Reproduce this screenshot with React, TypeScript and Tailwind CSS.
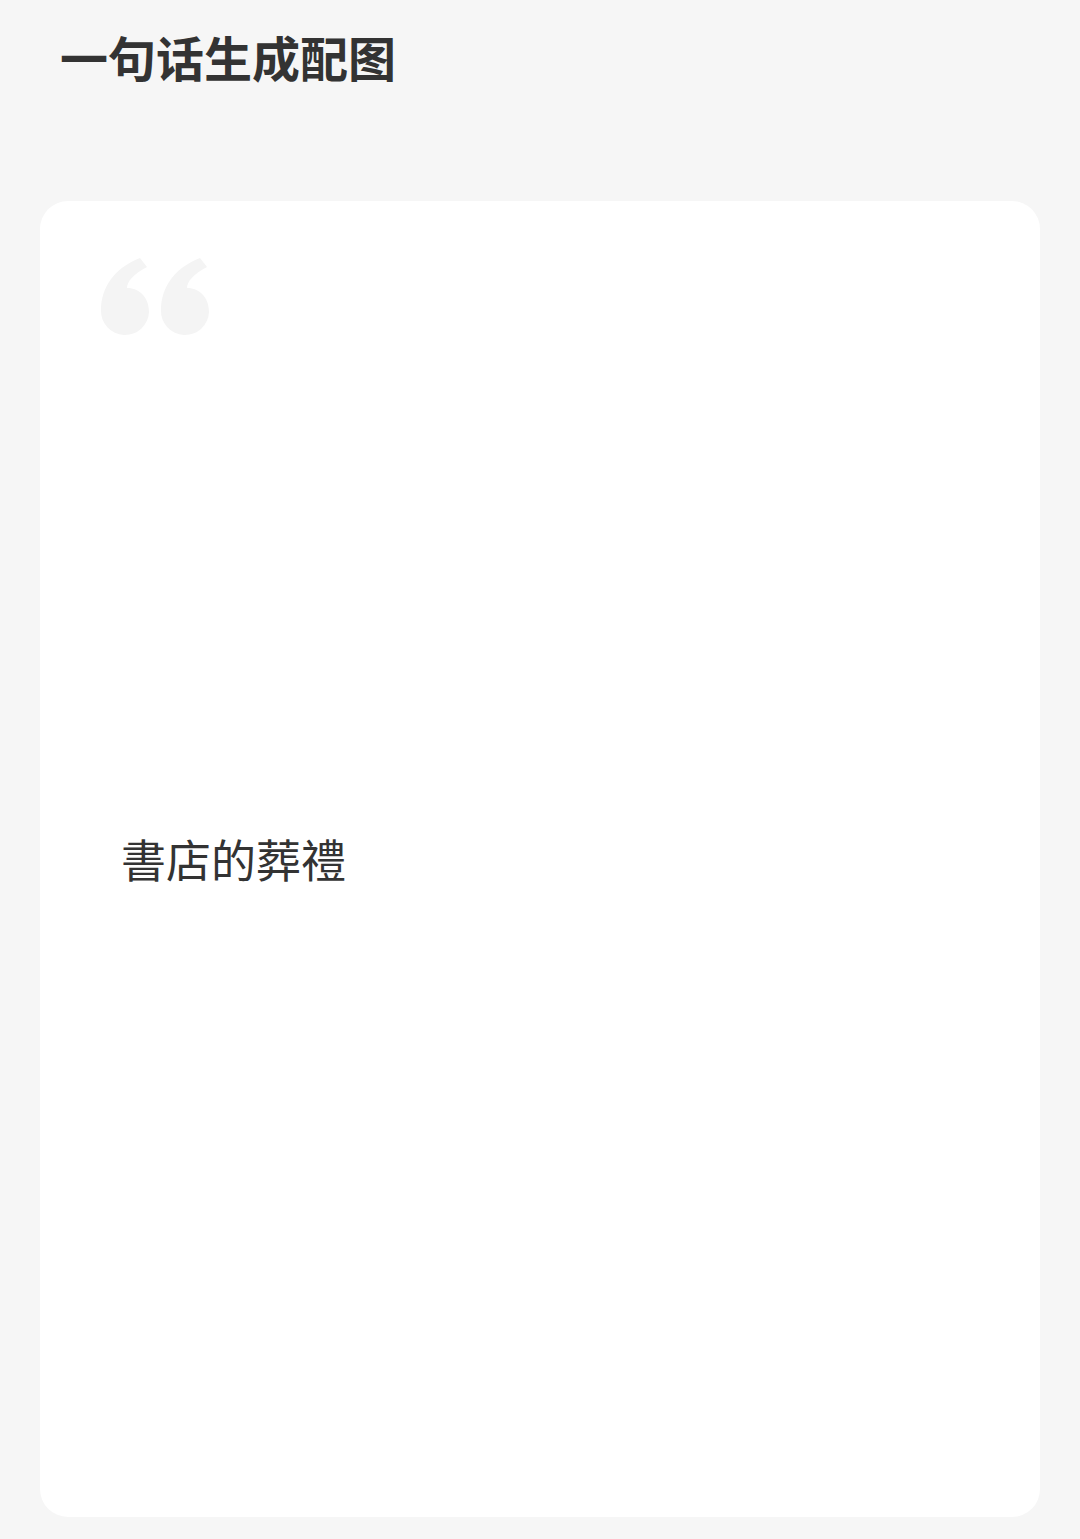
import React from 'react';

function QuoteMark({ className = '' }: { className?: string }) {
  // one "6"-shaped opening quote stroke, drawn twice
  const d =
    'M 1 52 C 1 30, 14 10, 40 0 L 47 9 C 33 16, 27 24, 27 30 C 40 30, 49 40, 49 54 A 24 24 0 1 1 1 52 Z';
  return (
    <svg className={className} width="110" height="78" viewBox="0 0 110 78" fill="#f4f4f4">
      <path d={d} />
      <path d={d} transform="translate(60 0)" />
    </svg>
  );
}

export default function App() {
  return (
    <div
      className="min-h-screen bg-[#f6f6f6] pt-5 pb-[22px]"
      style={{ fontFamily: '"Noto Sans CJK SC", "Noto Sans CJK TC", sans-serif' }}
    >
      <h1 className="pl-[60px] text-[48px] leading-[72px] font-bold text-[#333333]">一句话生成配图</h1>

      <div className="relative mx-[40px] mt-[109px] flex h-[1316px] items-center rounded-[28px] bg-white pl-[81px]">
        <QuoteMark className="absolute left-[60px] top-[57px]" />
        <p
          className="text-[45px] leading-[60px] text-[#333333]"
          style={{ fontFamily: '"Noto Sans CJK TC", "Noto Sans CJK SC", sans-serif' }}
        >
          書店的葬禮
        </p>
      </div>
    </div>
  );
}
